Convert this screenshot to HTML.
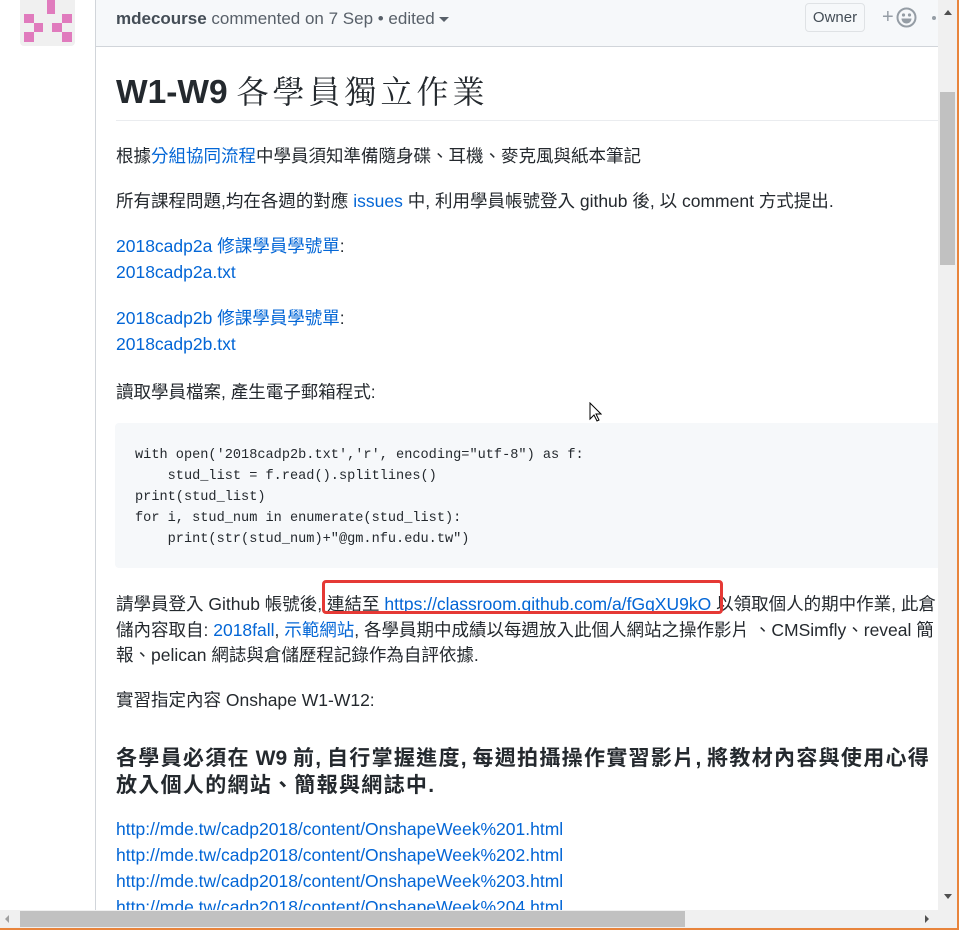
<!DOCTYPE html>
<html><head><meta charset="utf-8"><style>
*{margin:0;padding:0;box-sizing:border-box}
body{width:959px;height:930px;overflow:hidden;background:#fff;position:relative;font-family:"Liberation Sans","Noto Sans CJK TC",sans-serif;color:#24292e}
.l{position:absolute;left:116px;white-space:nowrap;font-size:17.5px;line-height:26px;height:26px}
i{font-style:normal;letter-spacing:0px}
a{color:#0366d6;text-decoration:none}
.code{position:absolute;left:115px;top:423px;width:830px;height:145px;background:#f6f8fa;border-radius:4px}
.cl{position:absolute;left:135px;white-space:pre;font-family:"Liberation Mono",monospace;font-size:13.6px;line-height:21px;color:#24292e}
</style></head><body>
<div style="position:absolute;left:20px;top:-10px;width:55px;height:56px;background:#f0f0f0;border-radius:4px"></div>
<div style="position:absolute;left:47px;top:0;width:8px;height:14px;background:#e07bbd"></div>
<div style="position:absolute;left:24px;top:14px;width:10px;height:9px;background:#e07bbd"></div>
<div style="position:absolute;left:34px;top:23px;width:9px;height:9px;background:#e07bbd"></div>
<div style="position:absolute;left:24px;top:32px;width:10px;height:10px;background:#e07bbd"></div>
<div style="position:absolute;left:62px;top:14px;width:10px;height:9px;background:#e07bbd"></div>
<div style="position:absolute;left:52px;top:23px;width:10px;height:9px;background:#e07bbd"></div>
<div style="position:absolute;left:62px;top:32px;width:10px;height:10px;background:#e07bbd"></div>
<div style="position:absolute;left:95px;top:0;width:860px;height:930px;border-left:1px solid #d1d5da"></div>
<div style="position:absolute;left:96px;top:0;width:860px;height:47px;background:#f6f8fa;border-bottom:1px solid #d1d5da"></div>
<div style="position:absolute;left:116px;top:7px;font-size:17px;line-height:24px;color:#586069;white-space:nowrap"><b style="color:#444d56">mdecourse</b> commented on 7 Sep • edited <span style="display:inline-block;border:5px solid transparent;border-top:5px solid #586069;vertical-align:middle;margin-top:4px"></span></div>
<div style="position:absolute;left:805px;top:3px;width:60px;height:29px;border:1px solid #dfe2e5;border-radius:4px;font-size:15px;line-height:27px;text-align:center;color:#444d56">Owner</div>
<div style="position:absolute;left:882px;top:6px;font-size:20px;color:#959da5;line-height:22px">+</div>
<svg style="position:absolute;left:896px;top:7px" width="21" height="21" viewBox="0 0 21 21"><circle cx="10.5" cy="10.5" r="9" fill="none" stroke="#959da5" stroke-width="2"/><circle cx="7.5" cy="8" r="1.6" fill="#959da5"/><circle cx="13.5" cy="8" r="1.6" fill="#959da5"/><path d="M5.5 11.5h10c0 3-2.3 5-5 5s-5-2-5-5z" fill="#959da5"/></svg>
<div style="position:absolute;left:932px;top:16px;width:4px;height:4px;border-radius:2px;background:#959da5"></div>
<div style="position:absolute;left:116px;top:68px;font-size:32px;line-height:44px;white-space:nowrap"><b style="font-size:33.5px">W1-W9</b> <span style="font-family:'Noto Serif CJK SC',serif;letter-spacing:4px">各學員獨立作業</span></div>
<div style="position:absolute;left:116px;top:120px;width:830px;height:1px;background:#eaecef"></div>
<div class="l" style="top:143px"><i>根據</i><a><i>分組協同流程</i></a><i>中學員須知準備隨身碟、耳機、麥克風與紙本筆記</i></div>
<div class="l" style="top:188px"><i>所有課程問題,均在各週的對應</i> <a>issues</a> <i>中</i>, <i>利用學員帳號登入</i> github <i>後</i>, <i>以</i> comment <i>方式提出</i>.</div>
<div class="l" style="top:233px"><a>2018cadp2a <i>修課學員學號單</i></a>:</div>
<div class="l" style="top:259px"><a>2018cadp2a.txt</a></div>
<div class="l" style="top:305px"><a>2018cadp2b <i>修課學員學號單</i></a>:</div>
<div class="l" style="top:331px"><a>2018cadp2b.txt</a></div>
<div class="l" style="top:379px"><i>讀取學員檔案</i>, <i>產生電子郵箱程式</i>:</div>
<div class="code"></div>
<div class="cl" style="top:445px">with open('2018cadp2b.txt','r', encoding="utf-8") as f:
    stud_list = f.read().splitlines()
print(stud_list)
for i, stud_num in enumerate(stud_list):
    print(str(stud_num)+"@gm.nfu.edu.tw")</div>
<div class="l" style="top:591px"><i>請學員登入</i> Github <i>帳號後</i>, <i>連結至</i> <a>https://classroom.github.com/a/fGqXU9kO</a> <i>以領取個人的期中作業</i>, <i>此倉</i></div>
<div style="position:absolute;left:322px;top:580px;width:401px;height:34px;border:3px solid #e53935;border-radius:4px"></div>
<div class="l" style="top:617px"><i>儲內容取自</i>: <a>2018fall</a>, <a><i>示範網站</i></a>, <i>各學員期中成績以每週放入此個人網站之操作影片</i> <i>、</i>CMSimfly<i>、</i>reveal <i>簡</i></div>
<div class="l" style="top:642px"><i>報、</i>pelican <i>網誌與倉儲歷程記錄作為自評依據</i>.</div>
<div class="l" style="top:687px"><i>實習指定內容</i> Onshape W1-W12:</div>
<div class="l" style="top:744px;font-size:21px;line-height:30px;font-weight:bold"><i style="letter-spacing:1.3px">各學員必須在</i> W9 <i style="letter-spacing:1.3px">前</i>, <i style="letter-spacing:1.3px">自行掌握進度</i>, <i style="letter-spacing:1.3px">每週拍攝操作實習影片</i>, <i style="letter-spacing:1.3px">將教材內容與使用心得</i></div>
<div class="l" style="top:771px;font-size:21px;line-height:30px;font-weight:bold"><i style="letter-spacing:1.3px">放入個人的網站、簡報與網誌中</i>.</div>
<div class="l" style="top:816px"><a>http://mde.tw/cadp2018/content/OnshapeWeek%201.html</a></div>
<div class="l" style="top:842px"><a>http://mde.tw/cadp2018/content/OnshapeWeek%202.html</a></div>
<div class="l" style="top:868px"><a>http://mde.tw/cadp2018/content/OnshapeWeek%203.html</a></div>
<div class="l" style="top:894px"><a>http://mde.tw/cadp2018/content/OnshapeWeek%204.html</a></div>
<div style="position:absolute;left:938px;top:0;width:19px;height:910px;background:#f0f0f0"></div>
<div style="position:absolute;left:944px;top:10px;border:4px solid transparent;border-bottom:5px solid #505050;border-top:0"></div>
<div style="position:absolute;left:940px;top:92px;width:15px;height:173px;background:#c1c1c1"></div>
<div style="position:absolute;left:944px;top:894px;border:4px solid transparent;border-top:5px solid #505050;border-bottom:0"></div>
<div style="position:absolute;left:0;top:910px;width:957px;height:18px;background:#f0f0f0"></div>
<div style="position:absolute;left:20px;top:911px;width:665px;height:16px;background:#c1c1c1"></div>
<div style="position:absolute;left:5px;top:915px;border:4px solid transparent;border-right:4px solid #a0a0a0;border-left:0"></div>
<div style="position:absolute;left:925px;top:915px;border:4px solid transparent;border-left:4px solid #505050;border-right:0"></div>
<div style="position:absolute;left:957px;top:0;width:2px;height:930px;background:#e8843c"></div>
<div style="position:absolute;left:0;top:928px;width:959px;height:2px;background:#e8843c"></div>
<svg style="position:absolute;left:589px;top:402px" width="13" height="21" viewBox="0 0 13 21"><path d="M1 1v16l4-4 3 6 2-1-3-6h5z" fill="#fff" stroke="#000" stroke-width="1"/></svg>
</body></html>
